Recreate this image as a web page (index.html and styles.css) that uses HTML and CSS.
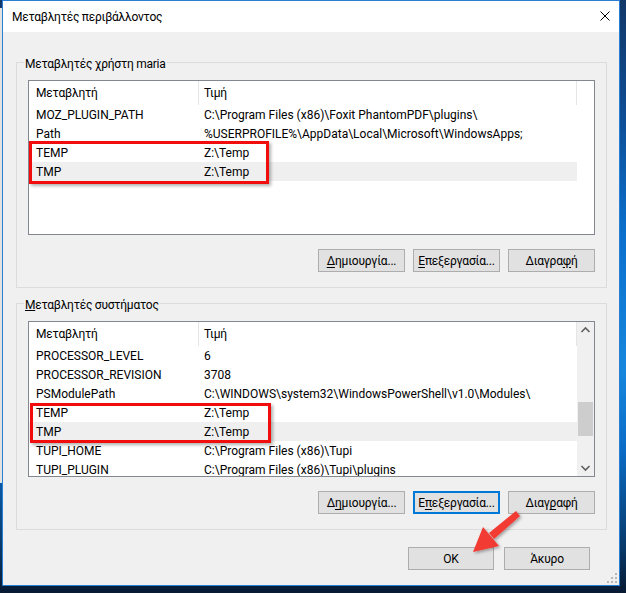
FILE: index.html
```html
<!DOCTYPE html>
<html lang="el">
<head>
    <meta charset="UTF-8">
    <title>Μεταβλητές περιβάλλοντος</title>
    <link rel="stylesheet" href="styles.css">
</head>
<body>

<div class="window">
    <!-- title bar -->
    <div class="titlebar">
        <span class="title">Μεταβλητές περιβάλλοντος</span>
        <svg class="close" width="10" height="10" viewBox="0 0 10 10">
            <path d="M0.5 0.5 L9.5 9.5 M9.5 0.5 L0.5 9.5" stroke="#000" stroke-width="1" fill="none"/>
        </svg>
    </div>

    <div class="content">
        <!-- user variables -->
        <div class="group">
            <div class="group-title">Μεταβλητές χρήστη maria</div>
            <div class="list">
                <div class="list-main">
                    <div class="list-head">
                        <div class="col-name">Μεταβλητή</div>
                        <div class="col-value">Τιμή</div>
                    </div>
                    <div class="row"><div class="col-name">MOZ_PLUGIN_PATH</div><div class="col-value">C:\Program Files (x86)\Foxit PhantomPDF\plugins\</div></div>
                    <div class="row"><div class="col-name">Path</div><div class="col-value">%USERPROFILE%\AppData\Local\Microsoft\WindowsApps;</div></div>
                    <div class="row"><div class="col-name">TEMP</div><div class="col-value">Z:\Temp</div></div>
                    <div class="row selected"><div class="col-name">TMP</div><div class="col-value">Z:\Temp</div></div>
                </div>
                <div class="scroll-space"></div>
                <div class="mark mark-user"></div>
            </div>
            <div class="buttons">
                <button type="button" class="btn"><u>Δ</u>ημιουργία...</button>
                <button type="button" class="btn"><u>Ε</u>πεξεργασία...</button>
                <button type="button" class="btn">Διαγρα<u>φ</u>ή</button>
            </div>
        </div>

        <!-- system variables -->
        <div class="group">
            <div class="group-title"><u>Μ</u>εταβλητές συστήματος</div>
            <div class="list list-system">
                <div class="list-main">
                    <div class="list-head">
                        <div class="col-name">Μεταβλητή</div>
                        <div class="col-value">Τιμή</div>
                    </div>
                    <div class="row"><div class="col-name">PROCESSOR_LEVEL</div><div class="col-value">6</div></div>
                    <div class="row"><div class="col-name">PROCESSOR_REVISION</div><div class="col-value">3708</div></div>
                    <div class="row"><div class="col-name">PSModulePath</div><div class="col-value">C:\WINDOWS\system32\WindowsPowerShell\v1.0\Modules\</div></div>
                    <div class="row"><div class="col-name">TEMP</div><div class="col-value">Z:\Temp</div></div>
                    <div class="row selected"><div class="col-name">TMP</div><div class="col-value">Z:\Temp</div></div>
                    <div class="row"><div class="col-name">TUPI_HOME</div><div class="col-value">C:\Program Files (x86)\Tupi</div></div>
                    <div class="row"><div class="col-name">TUPI_PLUGIN</div><div class="col-value">C:\Program Files (x86)\Tupi\plugins</div></div>
                </div>
                <div class="scrollbar">
                    <svg class="scroll-arrow" width="17" height="17" viewBox="0 0 17 17">
                        <path d="M4.5 10 L8.5 6 L12.5 10" stroke="#606060" stroke-width="1.6" fill="none"/>
                    </svg>
                    <div class="scroll-track">
                        <div class="scroll-thumb"></div>
                    </div>
                    <svg class="scroll-arrow" width="17" height="17" viewBox="0 0 17 17">
                        <path d="M4.5 7 L8.5 11 L12.5 7" stroke="#606060" stroke-width="1.6" fill="none"/>
                    </svg>
                </div>
                <div class="mark mark-system"></div>
            </div>
            <div class="buttons">
                <button type="button" class="btn">Δ<u>η</u>μιουργία...</button>
                <button type="button" class="btn focused">Ε<u>π</u>εξεργασία...</button>
                <button type="button" class="btn">Διαγ<u>ρ</u>αφή</button>
            </div>
        </div>

        <!-- dialog buttons -->
        <div class="dialog-buttons">
            <button type="button" class="btn btn-wide">OK</button>
            <button type="button" class="btn btn-wide">Άκυρο</button>
        </div>
    </div>

    <!-- resize grip -->
    <svg class="grip" width="10" height="10" viewBox="0 0 10 10">
        <g fill="#b8b8b8">
            <rect x="8" y="0" width="2" height="2"/>
            <rect x="4" y="4" width="2" height="2"/>
            <rect x="8" y="4" width="2" height="2"/>
            <rect x="0" y="8" width="2" height="2"/>
            <rect x="4" y="8" width="2" height="2"/>
            <rect x="8" y="8" width="2" height="2"/>
        </g>
    </svg>
</div>

<!-- annotation arrow -->
<svg class="arrow" width="626" height="593" viewBox="0 0 626 593">
    <defs>
        <filter id="shadow" x="-20%" y="-20%" width="140%" height="140%">
            <feDropShadow dx="1.5" dy="1.5" stdDeviation="1.5" flood-color="#000" flood-opacity="0.35"/>
        </filter>
    </defs>
    <g filter="url(#shadow)" fill="#f23b33">
        <polygon points="516,511 520,516 494,539 489,533"/>
        <polygon points="473,552 483,527 499,546"/>
    </g>
</svg>

</body>
</html>
```

FILE: styles.css
```css
/* page / desktop */
body {
    margin: 0;
    width: 626px;
    height: 593px;
    overflow: hidden;
    position: relative;
    font-family: Roboto, "Noto Sans", "DejaVu Sans", sans-serif;
    font-size: 12px;
    color: #000;
    background:
        linear-gradient(#e2e2e2, #e2e2e2) 0 8px / 2px 475px no-repeat,
        linear-gradient(to bottom, #123868 0, #0f4c92 110px, #0a6fcb 230px, #1787de 370px, #0b6cc6 450px, #083867 550px, #081a32 593px);
}

/* dialog window */
.window {
    position: relative;
    margin-left: 2px;
    width: 618px;
    height: 586px;
    box-sizing: border-box;
    border: 1px solid #2a7fd3;
    background-color: #f0f0f0;
    display: flex;
    flex-direction: column;
}

.titlebar {
    height: 31px;
    background-color: #fff;
    display: flex;
    align-items: center;
    justify-content: space-between;
    padding: 1px 9px 0 9px;
    box-sizing: border-box;
}

.title {
    font-size: 12px;
    letter-spacing: -0.25px;
}

.close {
    display: block;
    margin-top: -2px;
}

.content {
    padding: 30px 12px 0 13px;
}

/* group box */
.group {
    border: 1px solid #dcdcdc;
    padding: 0 11px 15px 11px;
}

.group + .group {
    margin-top: 15px;
}

.group-title {
    width: fit-content;
    margin: -7px 0 0 -4px;
    padding: 0 1px;
    line-height: 16px;
    letter-spacing: -0.25px;
    background-color: #f0f0f0;
}

/* list view */
.list {
    position: relative;
    margin-top: 8px;
    height: 155px;
    box-sizing: border-box;
    border: 1px solid #828790;
    background-color: #fff;
    display: flex;
    overflow: hidden;
}

.list-system {
    height: 156px;
}

.list-main {
    width: 548px;
    overflow: hidden;
}

.list-head {
    display: flex;
    height: 24px;
    line-height: 24px;
    letter-spacing: -0.2px;
}

.list-head .col-name,
.list-head .col-value {
    border-right: 1px solid #e5e5e5;
}

.col-name {
    width: 170px;
    box-sizing: border-box;
    padding-left: 7px;
    flex-shrink: 0;
    white-space: nowrap;
}

.col-value {
    width: 378px;
    box-sizing: border-box;
    padding-left: 5px;
    flex-shrink: 0;
    white-space: nowrap;
    overflow: hidden;
}

.row {
    display: flex;
    height: 19px;
    line-height: 21px;
    overflow: hidden;
}

.row.selected {
    background-color: #efefef;
}

.scroll-space {
    width: 17px;
}

.scrollbar {
    width: 17px;
    background-color: #f0f0f0;
    display: flex;
    flex-direction: column;
}

.scroll-arrow {
    display: block;
}

.scroll-track {
    flex: 1;
    position: relative;
}

.scroll-thumb {
    margin: 63px 1px 0 1px;
    height: 34px;
    background-color: #cdcdcd;
}

/* red highlight boxes */
.mark {
    position: absolute;
    box-sizing: border-box;
    border: 3px solid #f20d0d;
    box-shadow: 2px 2px 3px rgba(0, 0, 0, 0.3);
}

.mark-user {
    left: 0;
    top: 60px;
    width: 240px;
    height: 43px;
}

.mark-system {
    left: 1px;
    top: 81px;
    width: 241px;
    height: 40px;
}

/* buttons */
.buttons {
    margin-top: 14px;
    display: flex;
    justify-content: flex-end;
    gap: 8px;
}

.btn {
    width: 87px;
    height: 23px;
    padding: 1px 0 0 0;
    border: 1px solid #adadad;
    background-color: #e1e1e1;
    font-family: inherit;
    font-size: 12px;
    letter-spacing: -0.2px;
    color: #000;
}

.btn u {
    text-underline-offset: 2px;
}

.btn.focused {
    border-color: #0078d7;
    box-shadow: inset 0 0 0 1px #0078d7;
}

.dialog-buttons {
    margin-top: 17px;
    padding-right: 17px;
    display: flex;
    justify-content: flex-end;
    gap: 10px;
}

.btn-wide {
    width: 86px;
}

.grip {
    position: absolute;
    right: 2px;
    bottom: 2px;
}

.arrow {
    position: absolute;
    left: 0;
    top: 0;
    pointer-events: none;
}
```
